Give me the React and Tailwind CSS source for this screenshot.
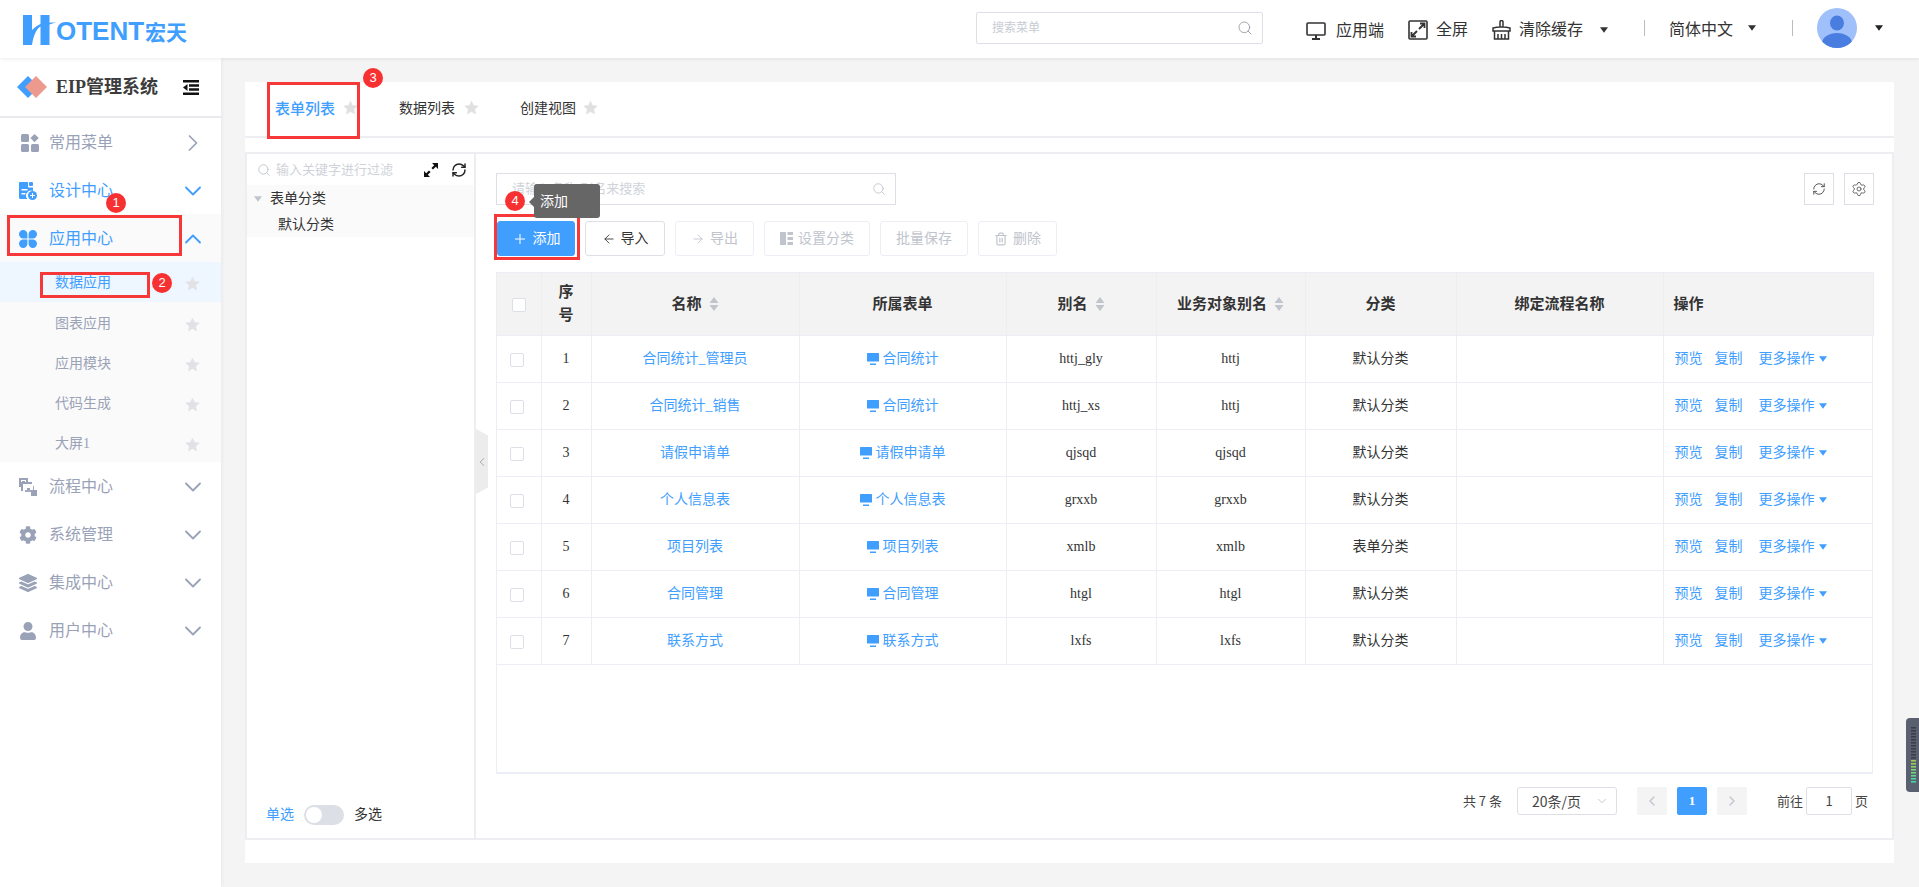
import React from 'react';
import { ChevronRight, ChevronDown, ChevronUp, ChevronLeft, Search, Plus, ArrowLeft, ArrowRight, Trash2, RefreshCw, Settings } from 'lucide-react';
import { FaCog, FaLayerGroup, FaUser } from 'react-icons/fa';

const Star = ({ className = '' }) => (
  <svg viewBox="0 0 24 24" className={className} fill="currentColor">
    <path d="M12 1.8l3.2 6.9 7.5.9-5.6 5.1 1.5 7.5L12 18.5l-6.6 3.7 1.5-7.5L1.3 9.6l7.5-.9z" stroke="currentColor" strokeWidth="1" strokeLinejoin="round" />
  </svg>
);
const Caret = ({ className = '' }) => (
  <svg viewBox="0 0 10 7" className={className} fill="currentColor"><path d="M0 0h10L5 7z" /></svg>
);
const GridIcon = () => (
  <svg viewBox="0 0 18 18" className="w-[18px] h-[18px] ml-[3px] shrink-0" fill="currentColor">
    <rect x="0" y="0" width="8" height="8" rx="1.5" /><path d="M13.5 0l4.3 4-4.3 4.2L9.4 4z" />
    <rect x="0" y="10" width="8" height="8" rx="1.5" /><rect x="10" y="10" width="8" height="8" rx="1.5" />
  </svg>
);
const DesignIcon = () => (
  <svg viewBox="0 0 18 18" className="w-[18px] h-[18px]" fill="currentColor">
    <path d="M1 0h8v4.5c0 .6.4 1 1 1h4V9a5 5 0 0 0-5.6 8H1.5C.7 17 0 16.300 0 15.500V1c0-.6.4-1 1-1z" />
    <rect x="10" y="0" width="4" height="4" rx="1" />
    <rect x="2.500" y="7" width="6" height="1.500" fill="#fff" /><rect x="2.500" y="11" width="4" height="1.500" fill="#fff" />
    <circle cx="13.500" cy="13.500" r="4.500" /><path d="M13 11h1v2h2v1h-2v2h-1v-2h-2v-1h2z" fill="#fff" />
  </svg>
);
const CloverIcon = () => (
  <svg viewBox="0 0 18 18" className="w-[18px] h-[18px]" fill="currentColor">
    <path d="M4.200 0C6.500 0 8.400 1.900 8.400 4.200v4.200H4.200a4.200 4.200 0 0 1 0-8.400zM13.800 0a4.200 4.200 0 0 1 0 8.400H9.600V4.200C9.600 1.900 11.500 0 13.800 0zM4.200 9.600h4.200v4.200a4.200 4.200 0 1 1-4.200-4.200zM9.600 9.600h4.200a4.200 4.200 0 1 1-4.200 4.200z" />
  </svg>
);
const FlowIcon = () => (
  <svg viewBox="0 0 18 18" className="w-[18px] h-[18px]" fill="currentColor">
    <path fillRule="evenodd" d="M0 0h9v4h4v2H4v7H2V9H0zM4 2H2v5h0V4h5V2z" />
    <rect x="3" y="3" width="3" height="3" /><path d="M6 8h9v9h-3v-3H6v-2h8V8z" opacity=".9" />
    <rect x="8" y="10" width="3" height="2" /><rect x="12" y="12" width="6" height="6" />
  </svg>
);

const Badge = ({ n, className }) => (
  <div className={`absolute w-5 h-5 rounded-full bg-[#f73131] text-white text-[13px] leading-5 text-center [font-family:Liberation_Sans,sans-serif] ${className}`}>{n}</div>
);
const RedBox = ({ className }) => <div className={`absolute border-[3px] border-[#f73838] ${className}`} />;

const MenuItem = ({ icon, label, blue, open, right, bg }) => (
  <div className={`h-12 pt-[2px] flex items-center pl-[19px] pr-[14px] ${bg || ''} ${blue ? 'text-[#409eff]' : 'text-[#9aa2b7]'}`}>
    <span className="w-[18px] flex justify-center">{icon}</span>
    <span className="ml-3 text-base flex-1 whitespace-nowrap">{label}</span>
    {right === 'r' ? <ChevronRight className="w-7 h-7 text-[#9aa2b7]" strokeWidth={1.5} /> : open ? <ChevronUp className="w-7 h-7 text-[#409eff]" strokeWidth={1.6} /> : <ChevronDown className={`w-7 h-7 ${blue ? 'text-[#409eff]' : 'text-[#9aa2b7]'}`} strokeWidth={1.6} />}
  </div>
);
const SubItem = ({ label, active }) => (
  <div className={`h-10 flex items-center pl-[55px] pr-[21px] text-sm ${active ? 'bg-[#eef6ff] text-[#409eff] pt-[2px]' : 'text-[#9aa2b7] pt-1'}`}>
    <span className="flex-1">{label}</span>
    <Star className="w-[15px] h-[15px] text-[#e1e2e5]" />
  </div>
);

const TopItem = ({ icon, label, className = '' }) => (
  <div className={`flex items-center text-base text-[#333] ${className}`}>{icon}<span>{label}</span></div>
);

const Btn = ({ children, w, primary, disabled }) => (
  <button className={`h-[35px] ${w} rounded-[3px] flex items-center justify-center text-sm gap-[5px] border whitespace-nowrap ${primary ? 'bg-[#409eff] border-[#409eff] text-white' : disabled ? 'bg-white border-[#ebeef5] text-[#c0c4cc]' : 'bg-white border-[#dcdfe6] text-[#333]'}`}>{children}</button>
);
const Sort = () => (
  <svg viewBox="0 0 10 14" className="inline-block w-[10px] h-[14px] ml-[7px] align-[-2px] text-[#c0c4cc]" fill="currentColor"><path d="M5 0l4.500 6H.5zM5 14L.5 8h9z" /></svg>
);

const rows = [
  [1, '合同统计_管理员', '合同统计', 'httj_gly', 'httj', '默认分类'],
  [2, '合同统计_销售', '合同统计', 'httj_xs', 'httj', '默认分类'],
  [3, '请假申请单', '请假申请单', 'qjsqd', 'qjsqd', '默认分类'],
  [4, '个人信息表', '个人信息表', 'grxxb', 'grxxb', '默认分类'],
  [5, '项目列表', '项目列表', 'xmlb', 'xmlb', '表单分类'],
  [6, '合同管理', '合同管理', 'htgl', 'htgl', '默认分类'],
  [7, '联系方式', '联系方式', 'lxfs', 'lxfs', '默认分类'],
];
const cell = 'border-r border-b border-[#ebeef5] text-center';
const th = 'border-r border-b border-[#ebeef5] text-center font-bold text-[15px] text-[#333]';

export default function App() {
  return (
    <div className="relative w-[1919px] h-[887px] overflow-hidden bg-[#f4f4f4] text-[#333] flex flex-col [font-family:Liberation_Serif,Noto_Sans_CJK_SC,serif]">
      {/* Header */}
      <header className="h-[58px] shrink-0 bg-white flex items-center shadow-[0_1px_4px_rgba(0,0,0,0.08)] relative z-10">
        <div className="flex items-end ml-[23px] text-[#409eff] h-[31px] mt-[3px]">
          <svg viewBox="0 0 33 30" className="w-[33px] h-[30px] self-start" fill="currentColor">
            <path d="M0 0h9v15C12 12 15 10 17.500 9V0H26.500V7.800C28.500 7.500 31 7.500 33 7.800 30 8.300 28.500 8.700 26.500 9.500V30H17.500V11.500C13.500 14 10.500 20 9 30H0z" />
          </svg>
          <span className="text-[26px] leading-[29px] font-bold [font-family:Liberation_Sans,sans-serif]">OTENT</span>
          <span className="ml-[1px] text-[21px] leading-[30px] font-bold [font-family:Noto_Sans_CJK_SC,sans-serif]">宏天</span>
        </div>
        <div className="absolute left-[976px] top-3 w-[287px] h-8 border border-[#dcdfe6] rounded-[2px] flex items-center pl-[15px] pr-[9px] text-xs text-[#c8ccd3]">
          <span className="flex-1">搜索菜单</span><Search className="w-4 h-4 text-[#9b9ea3]" strokeWidth={1.4} />
        </div>
        <TopItem className="absolute left-[1306px] top-[19px]" label="应用端" icon={
          <svg viewBox="0 0 20 18" className="w-5 h-[18px] mr-[10px]" fill="none" stroke="#333" strokeWidth="1.6"><rect x="1" y="1" width="18" height="12" rx="1" /><path d="M10 13v4M6 17h8" strokeWidth="2" /></svg>} />
        <TopItem className="absolute left-[1408px] top-[18px]" label="全屏" icon={
          <svg viewBox="0 0 20 20" className="w-5 h-5 mr-2" fill="none" stroke="#333" strokeWidth="1.6"><rect x="1" y="1" width="18" height="18" rx="1" /><path d="M11 9l5-5M12 3.500h4.500V8M9 11l-5 5M3.500 12v4.500H8" strokeWidth="1.800" /></svg>} />
        <TopItem className="absolute left-[1492px] top-[18px]" label="清除缓存" icon={
          <svg viewBox="0 0 19 20" className="w-[19px] h-5 mr-2" fill="none" stroke="#333" strokeWidth="1.500"><path d="M8 7V2a1.500 1.500 0 0 1 3 0v5M1 8c2-.5 5-1 7-1h3c2 0 5 .5 7 1v3H1zM2.500 11v8h14v-8M6 14v5M9.500 14v5M13 14v5" /></svg>} />
        <Caret className="absolute left-[1600px] top-[27px] w-2 h-[6px] text-[#333]" />
        <div className="absolute left-[1644px] top-5 w-px h-4 bg-[#b9bcc2]" />
        <div className="absolute left-[1669px] top-[18px] text-base text-[#333]">简体中文</div>
        <Caret className="absolute left-[1748px] top-[25px] w-2 h-[6px] text-[#333]" />
        <div className="absolute left-[1792px] top-5 w-px h-4 bg-[#b9bcc2]" />
        <svg viewBox="0 0 40 40" className="absolute left-[1817px] top-2 w-10 h-10">
          <circle cx="20" cy="20" r="20" fill="#9fc0fb" />
          <clipPath id="av"><circle cx="20" cy="20" r="20" /></clipPath>
          <g clipPath="url(#av)" fill="#4a7de0"><ellipse cx="20" cy="15" rx="7" ry="7.500" /><ellipse cx="20" cy="35" rx="15" ry="10" /></g>
        </svg>
        <Caret className="absolute left-[1875px] top-[25px] w-2 h-[6px] text-[#222]" />
      </header>

      <div className="flex flex-1 min-h-0">
        {/* Sidebar */}
        <aside className="w-[221px] shrink-0 bg-white shadow-[1px_0_4px_rgba(0,0,0,0.05)]">
          <div className="h-[60px] border-b-2 border-[#e8eaee] flex items-center pl-[17px] pr-[22px]">
            <svg viewBox="0 0 30 22" className="w-[30px] h-[22px]">
              <path d="M11 0l11 11-11 11L0 11z" fill="#409eff" />
              <path d="M19 0l11 11-11 11L8 11z" fill="#ec9a8e" />
            </svg>
            <span className="ml-[9px] flex-1 text-[18px] font-bold text-[#3c3c3c] whitespace-nowrap">EIP管理系统</span>
            <svg viewBox="0 0 16 15" className="w-4 h-[15px]" fill="#111"><path d="M0 0h16v2.500H0zM0 12.500h16V15H0zM6 4.200h10v2.500H6zM6 8.200h10v2.500H6zM4.500 4v7L0 7.500z" /></svg>
          </div>
          <MenuItem icon={<GridIcon />} label="常用菜单" right="r" />
          <MenuItem icon={<DesignIcon />} label="设计中心" blue />
          <MenuItem icon={<CloverIcon />} label="应用中心" blue open bg="bg-[#fafafa]" />
          <div className="bg-[#fafafa]">
            <SubItem label="数据应用" active />
            <SubItem label="图表应用" />
            <SubItem label="应用模块" />
            <SubItem label="代码生成" />
            <SubItem label="大屏1" />
          </div>
          <MenuItem icon={<FlowIcon />} label="流程中心" />
          <MenuItem icon={<FaCog className="w-[18px] h-[18px]" />} label="系统管理" />
          <MenuItem icon={<FaLayerGroup className="w-[18px] h-[18px]" />} label="集成中心" />
          <MenuItem icon={<FaUser className="w-4 h-[18px]" />} label="用户中心" />
        </aside>

        {/* Main */}
        <main className="flex-1 min-w-0 pl-6 pr-[25px] pt-6">
          <div className="bg-white w-[1649px] h-[781px] flex flex-col">
            <div className="h-[56px] border-b-2 border-[#eceef2] flex items-center pl-[30px] text-[15px] shrink-0">
              <span className="text-[#409eff] font-medium">表单列表</span>
              <Star className="w-[15px] h-[15px] ml-[8px] -mt-[3px] text-[#e0e0e0]" />
              <span className="ml-[41px] text-sm text-[#333]">数据列表</span>
              <Star className="w-[15px] h-[15px] ml-[9px] -mt-[3px] text-[#e0e0e0]" />
              <span className="ml-[41px] text-sm text-[#333]">创建视图</span>
              <Star className="w-[15px] h-[15px] ml-[7px] -mt-[3px] text-[#e0e0e0]" />
            </div>
            <div className="h-[14px] shrink-0" />
            <div className="h-[688px] shrink-0 flex border-2 border-[#eceef2] relative">
              {/* Tree */}
              <div className="w-[229px] shrink-0 border-r-2 border-[#eceef2] flex flex-col relative">
                <div className="h-[31px] shrink-0 flex items-center pl-[10px] pr-[6px] text-[13px] text-[#cfd2d8]">
                  <Search className="w-[14px] h-[14px] text-[#c0c4cc]" strokeWidth={1.6} />
                  <span className="ml-[5px] flex-1 whitespace-nowrap">输入关键字进行过滤</span>
                  <svg viewBox="0 0 14 14" className="w-[14px] h-[14px] mr-[13px]" fill="#111"><path d="M8 0h6v6l-2.200-2.200L9 6.600 7.400 5l2.800-2.800zM6 14H0V8l2.200 2.200L5 7.400 6.600 9l-2.800 2.800z" /></svg>
                  <RefreshCw className="w-4 h-4 text-[#222] mr-[1px]" strokeWidth={2.2} />
                </div>
                <div className="bg-[#fafafa] text-sm text-[#333]">
                  <div className="h-[26px] pt-[2px] flex items-center pl-[7px]"><Caret className="w-2 h-[6px] text-[#c0c4cc]" /><span className="ml-[8px]">表单分类</span></div>
                  <div className="h-[26px] pt-[2px] flex items-center pl-[31px]">默认分类</div>
                </div>
                <div className="mt-auto mb-[13px] ml-[19px] flex items-center text-sm">
                  <span className="text-[#409eff]">单选</span>
                  <span className="ml-[10px] w-10 h-5 rounded-full bg-[#dcdfe6] p-[2px]"><span className="block w-4 h-4 rounded-full bg-white" /></span>
                  <span className="ml-[10px] text-[#333]">多选</span>
                </div>
                <div className="absolute -right-[14px] top-[275px] w-3 h-[65px] bg-[#ececec] [clip-path:polygon(0_0,100%_10%,100%_90%,0_100%)] flex items-center justify-center z-10">
                  <ChevronLeft className="w-[14px] h-[14px] text-[#9b9b9b] shrink-0" strokeWidth={1.5} />
                </div>
              </div>

              {/* Right panel */}
              <div className="flex-1 min-w-0 pl-5 pt-[19px] pr-[18px]">
                <div className="flex justify-between h-8">
                  <div className="w-[400px] h-8 border border-[#dcdfe6] flex items-center pl-[15px] pr-[9px] text-[13px] text-[#d0d3d9]">
                    <span className="flex-1">请输入名称,别名来搜索</span>
                    <Search className="w-[14px] h-[14px] text-[#bfc3c9]" strokeWidth={1.5} />
                  </div>
                  <div className="flex gap-[10px]">
                    <div className="w-[30px] h-8 border border-[#dcdfe6] flex items-center justify-center"><RefreshCw className="w-[14px] h-[14px] text-[#444]" strokeWidth={1.5} /></div>
                    <div className="w-[30px] h-8 border border-[#dcdfe6] flex items-center justify-center"><Settings className="w-4 h-4 text-[#555]" strokeWidth={1.3} /></div>
                  </div>
                </div>
                <div className="flex gap-[10px] mt-4 pl-[1px]">
                  <Btn w="w-[78px]" primary><Plus className="w-4 h-4" strokeWidth={1.5} />添加</Btn>
                  <Btn w="w-[80px]"><ArrowLeft className="w-[14px] h-[14px]" strokeWidth={1.5} />导入</Btn>
                  <Btn w="w-[79px]" disabled><ArrowRight className="w-[14px] h-[14px]" strokeWidth={1.5} />导出</Btn>
                  <Btn w="w-[106px]" disabled>
                    <svg viewBox="0 0 13 13" className="w-[13px] h-[13px]" fill="currentColor"><path d="M0 0h6v13H0zM7.500 0H13v3H7.500zM7.500 5H13v3H7.500zM7.500 10H13v3H7.500z" /></svg>
                    设置分类</Btn>
                  <Btn w="w-[88px]" disabled>批量保存</Btn>
                  <Btn w="w-[79px]" disabled><Trash2 className="w-[14px] h-[14px]" strokeWidth={2} />删除</Btn>
                </div>
                <div className="mt-4 h-[502px] w-[1377px] border-l border-r border-b-2 border-[#ebeef5]">
                  <table className="table-fixed border-collapse w-[1376px]">
                    <colgroup>
                      <col className="w-[44px]" /><col className="w-[50px]" /><col className="w-[208px]" /><col className="w-[207px]" />
                      <col className="w-[150px]" /><col className="w-[149px]" /><col className="w-[151px]" /><col className="w-[207px]" /><col className="w-[210px]" />
                    </colgroup>
                    <thead>
                      <tr className="h-[63px] bg-[#f3f3f4] border-t border-[#ebeef5]">
                        <th className={th}><span className="inline-block align-middle w-[14px] h-[14px] bg-white border border-[#dcdfe6] rounded-[2px]" /></th>
                        <th className={th}><div className="leading-[23px]">序<br />号</div></th>
                        <th className={th}>名称<Sort /></th>
                        <th className={th}>所属表单</th>
                        <th className={th}>别名<Sort /></th>
                        <th className={th}>业务对象别名<Sort /></th>
                        <th className={th}>分类</th>
                        <th className={th}>绑定流程名称</th>
                        <th className={`${th} !text-left pl-[10px]`}>操作</th>
                      </tr>
                    </thead>
                    <tbody className="text-sm">
                      {rows.map((r) => (
                        <tr key={r[0]} className="h-[47px]">
                          <td className={cell}><span className="inline-block align-middle w-[14px] h-[14px] -ml-[4px] bg-white border border-[#dcdfe6] rounded-[2px]" /></td>
                          <td className={cell}>{r[0]}</td>
                          <td className={`${cell} text-[#409eff]`}>{r[1]}</td>
                          <td className={`${cell} text-[#409eff]`}>
                            <span className="inline-flex items-center align-middle">
                              <svg viewBox="0 0 12 12" className="w-3 h-3 mr-1" fill="#409eff"><rect x="0" y="0" width="12" height="8.500" rx=".5" /><rect x="3" y="10.500" width="6" height="1.500" /></svg>
                              {r[2]}
                            </span>
                          </td>
                          <td className={cell}>{r[3]}</td>
                          <td className={cell}>{r[4]}</td>
                          <td className={cell}>{r[5]}</td>
                          <td className={cell}></td>
                          <td className="border-b border-[#ebeef5] pl-[11px] text-[#409eff]">
                            <span className="inline-flex items-center align-middle whitespace-nowrap">
                              预览<span className="ml-3">复制</span><span className="ml-4">更多操作</span><Caret className="w-2 h-[6px] ml-1" />
                            </span>
                          </td>
                        </tr>
                      ))}
                    </tbody>
                  </table>
                </div>
                <div className="mt-[13px] h-7 relative text-[13px] text-[#444] flex items-center justify-end w-[1377px] [font-family:Noto_Sans_CJK_SC,Liberation_Sans,sans-serif]">
                  <span className="whitespace-nowrap">共 7 条</span>
                  <div className="ml-[15px] w-[100px] h-7 border border-[#dcdfe6] rounded-[3px] flex items-center pl-[14px] pr-[7px]">
                    <span className="flex-1 text-sm">20条/页</span><ChevronDown className="w-[14px] h-[14px] text-[#c0c4cc]" strokeWidth={1.6} />
                  </div>
                  <div className="ml-5 w-[30px] h-7 bg-[#f4f4f5] rounded-[2px] flex items-center justify-center"><ChevronLeft className="w-4 h-4 text-[#c0c4cc]" strokeWidth={2} /></div>
                  <div className="ml-[10px] w-[30px] h-7 bg-[#409eff] rounded-[2px] flex items-center justify-center text-white font-bold [font-family:Liberation_Serif,serif]">1</div>
                  <div className="ml-[10px] w-[30px] h-7 bg-[#f4f4f5] rounded-[2px] flex items-center justify-center"><ChevronRight className="w-4 h-4 text-[#c0c4cc]" strokeWidth={2} /></div>
                  <span className="ml-[30px]">前往</span>
                  <div className="ml-[3px] w-[46px] h-7 border border-[#dcdfe6] rounded-[2px] flex items-center justify-center">1</div>
                  <span className="ml-[3px] mr-[5px]">页</span>
                </div>
              </div>
            </div>
          </div>
        </main>
      </div>

      {/* Annotations */}
      <RedBox className="left-[7px] top-[215px] w-[175px] h-[41px]" />
      <RedBox className="left-[40px] top-[272px] w-[110px] h-[26px]" />
      <RedBox className="left-[267px] top-[82px] w-[93px] h-[57px]" />
      <RedBox className="left-[494px] top-[214px] w-[86px] h-[46px]" />
      <Badge n="1" className="left-[106px] top-[193px]" />
      <Badge n="2" className="left-[152px] top-[273px]" />
      <Badge n="3" className="left-[363px] top-[68px]" />
      <Badge n="4" className="left-[505px] top-[191px]" />
      <div className="absolute left-[534px] top-[184px] w-[66px] h-[34px] rounded-[3px] bg-[#666] text-white text-[14px] flex items-center pl-[6px]">添加</div>
      <div className="absolute left-[529px] top-[197px] w-0 h-0 border-y-[5px] border-y-transparent border-r-[5px] border-r-[#666]" />

      {/* Floating meter widget */}
      <svg viewBox="0 0 13 74" className="absolute left-[1906px] top-[718px] w-[13px] h-[74px]">
        <path d="M13 0H4a4 4 0 0 0-4 4v66a4 4 0 0 0 4 4h9z" fill="#5b6070" />
        {Array.from({ length: 19 }).map((_, i) => (
          <rect key={i} x="5" y={9 + i * 3} width="5" height="1.600" fill={i < 11 ? '#3a3e49' : ['#a5c75a', '#9ccb62', '#8ed06c', '#7fd276', '#6fd480', '#5fd58c', '#4fd69a', '#3fd6a8'][i - 11]} />
        ))}
      </svg>
    </div>
  );
}
